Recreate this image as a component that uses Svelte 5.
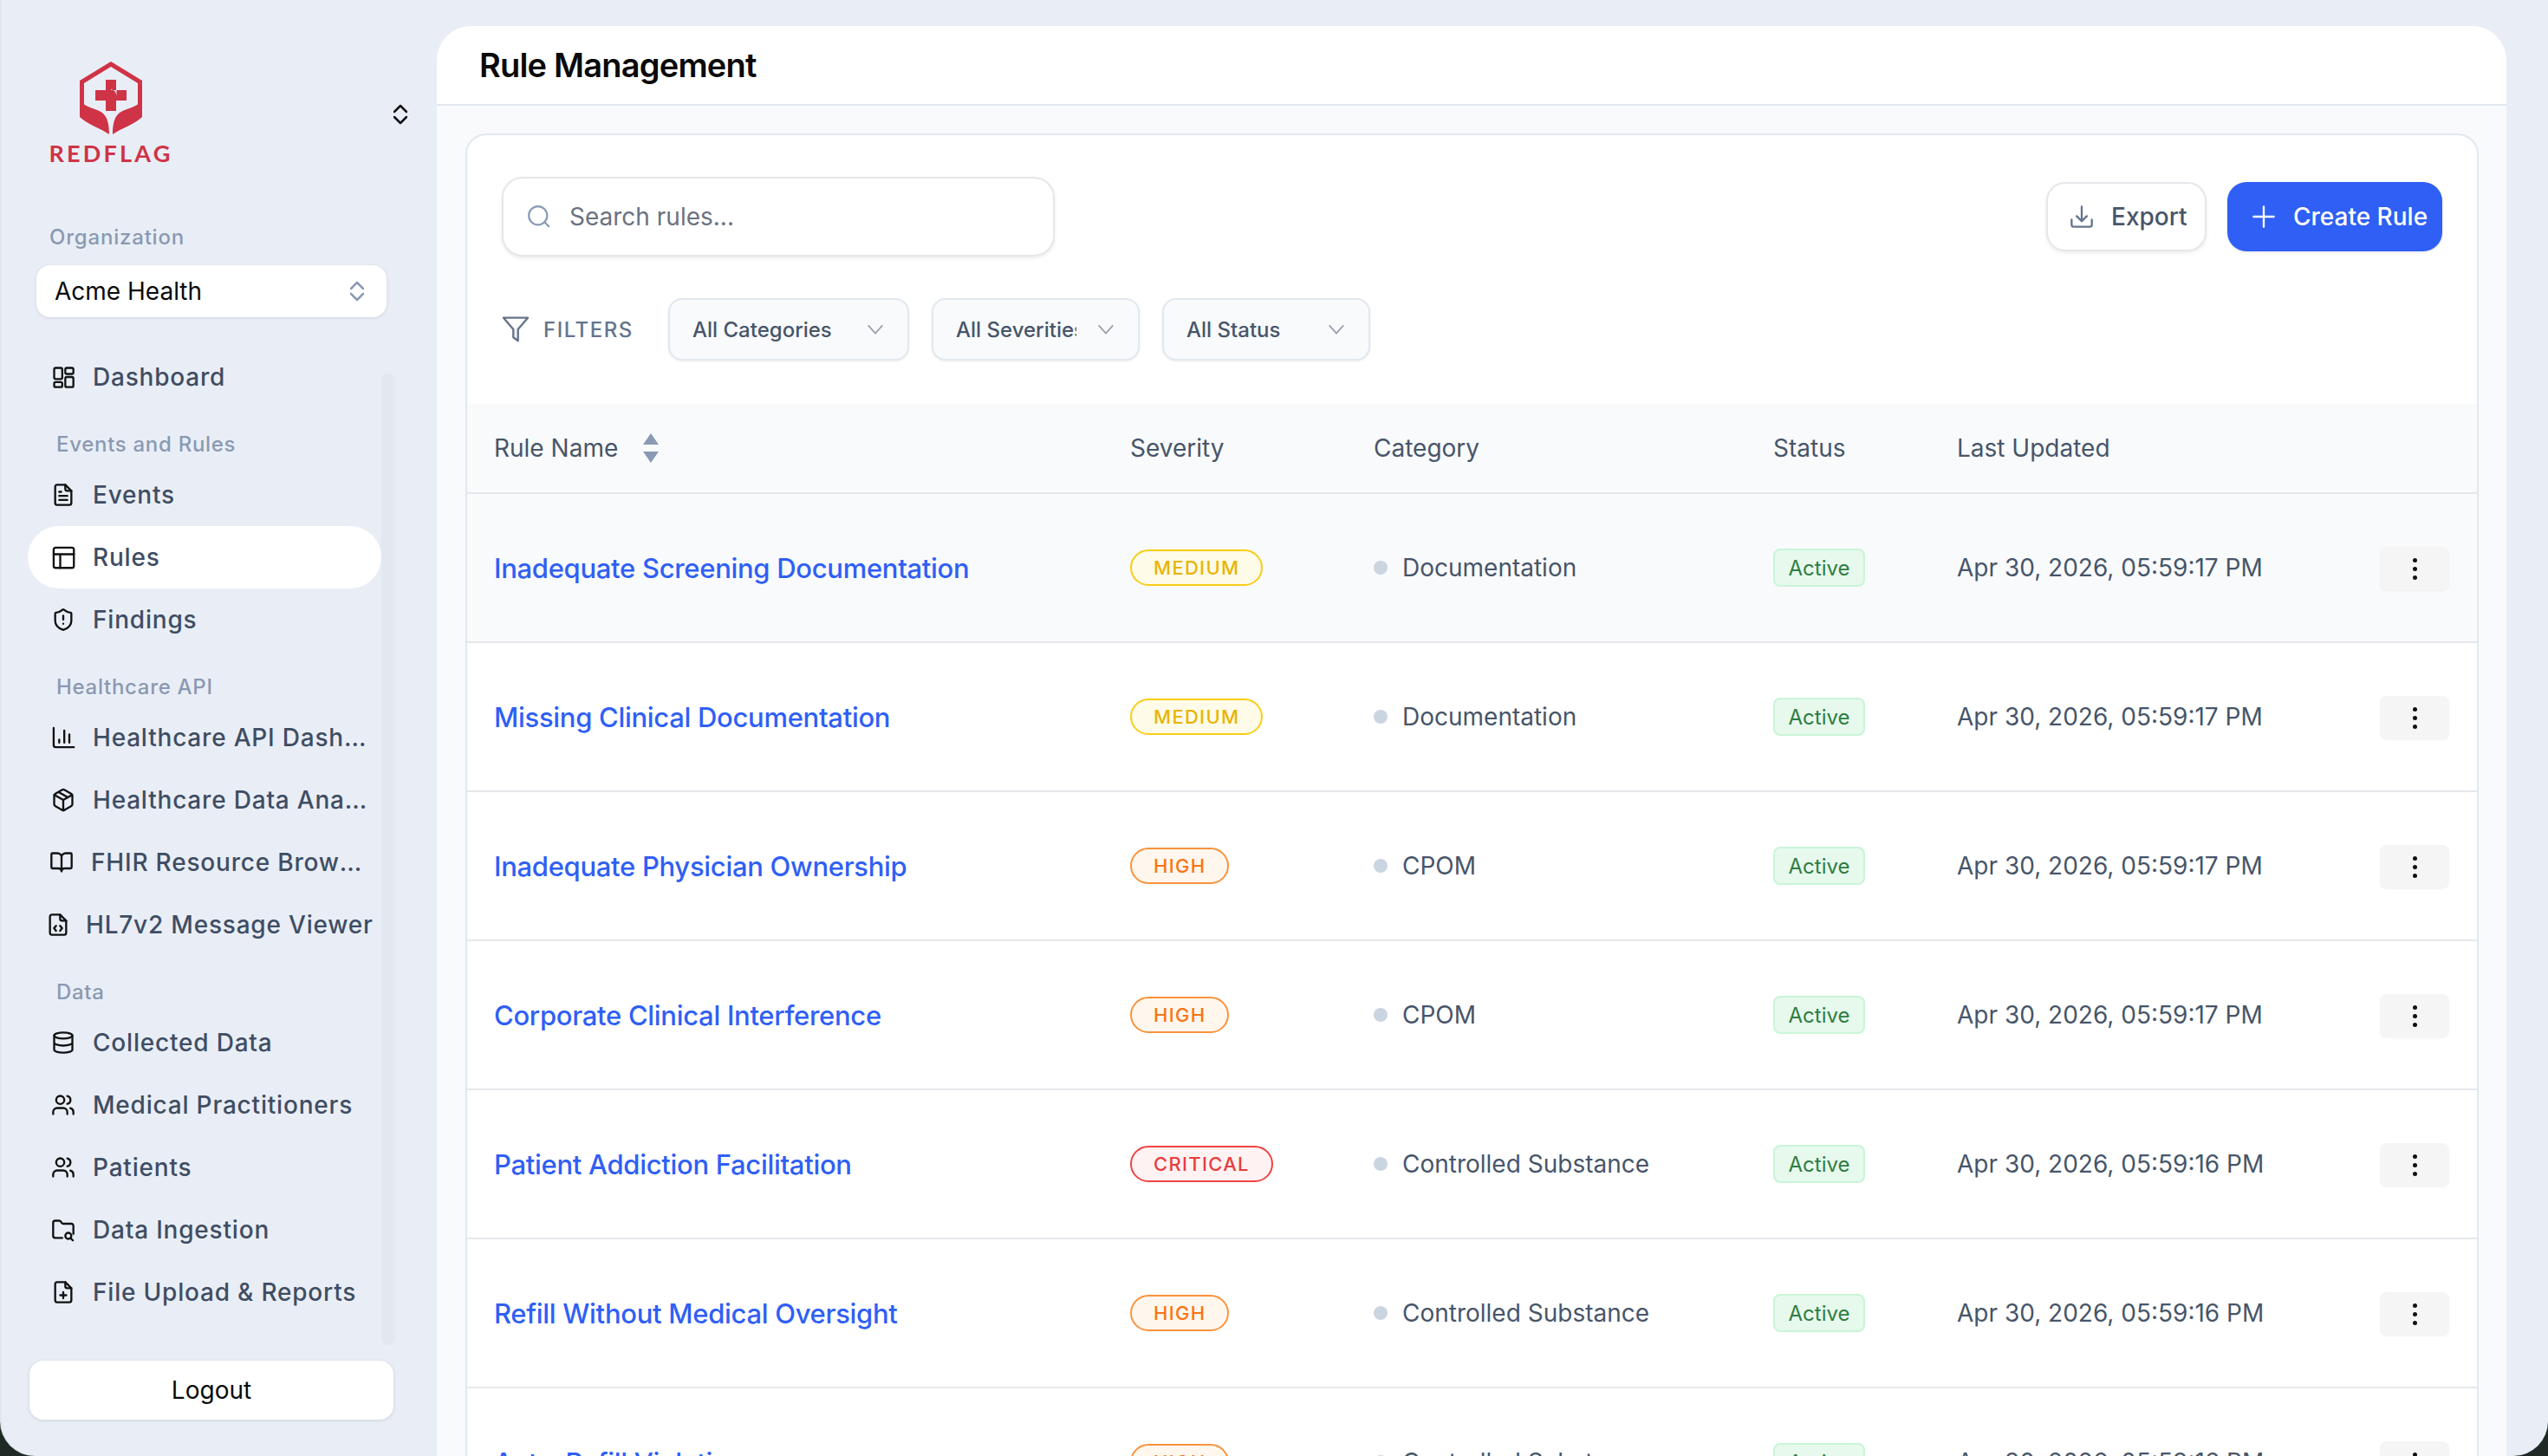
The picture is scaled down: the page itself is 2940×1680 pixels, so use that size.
<script>
  const nav = [
    { label: "Dashboard", icon: "dash" },
    { section: "Events and Rules" },
    { label: "Events", icon: "doc" },
    { label: "Rules", icon: "layout", active: true },
    { label: "Findings", icon: "shield" },
    { section: "Healthcare API" },
    { label: "Healthcare API Dashboard", icon: "chart" },
    { label: "Healthcare Data Analytics", icon: "box" },
    { label: "FHIR Resource Browser", icon: "book", shift: 1 },
    { label: "HL7v2 Message Viewer", icon: "code", shift: 2 },
    { section: "Data" },
    { label: "Collected Data", icon: "db" },
    { label: "Medical Practitioners", icon: "users" },
    { label: "Patients", icon: "users" },
    { label: "Data Ingestion", icon: "folder" },
    { label: "File Upload & Reports", icon: "fileplus" }
  ];

  const rules = [
    { name: "Inadequate Screening Documentation", severity: "MEDIUM", category: "Documentation", updated: "Apr 30, 2026, 05:59:17 PM", hover: true },
    { name: "Missing Clinical Documentation", severity: "MEDIUM", category: "Documentation", updated: "Apr 30, 2026, 05:59:17 PM" },
    { name: "Inadequate Physician Ownership", severity: "HIGH", category: "CPOM", updated: "Apr 30, 2026, 05:59:17 PM" },
    { name: "Corporate Clinical Interference", severity: "HIGH", category: "CPOM", updated: "Apr 30, 2026, 05:59:17 PM" },
    { name: "Patient Addiction Facilitation", severity: "CRITICAL", category: "Controlled Substance", updated: "Apr 30, 2026, 05:59:16 PM" },
    { name: "Refill Without Medical Oversight", severity: "HIGH", category: "Controlled Substance", updated: "Apr 30, 2026, 05:59:16 PM" },
    { name: "Auto-Refill Violations", severity: "HIGH", category: "Controlled Substance", updated: "Apr 30, 2026, 05:59:16 PM" }
  ];
</script>

<div class="shell">
  <aside class="sidebar">
    <div class="brand">
      <div class="logo">
        <svg class="mark" viewBox="0 0 72 84">
          <path fill="#cf3346" d="M36 0 72 22V47L67 52V25L36 6 5 25V52L0 47V22Z" />
          <path fill="#cf3346" d="M30 21H42V33H54V45H42V57H30V45H18V33H30Z" />
          <path fill="#e9eef5" d="M36 32c4 1 6 3 6.500 8V33H36Z" />
          <path fill="#cf3346" d="M0 44c3 6 12 9 20 12 8 3 14 8 14 28C24 77 8 72 0 64ZM72 44c-3 6-12 9-20 12-8 3-14 8-14 28 10-7 26-12 34-20Z" />
        </svg>
        <span class="wordmark">REDFLAG</span>
      </div>
      <svg class="updown black" viewBox="0 0 16 24"><path d="M1 9 8 2l7 7M1 15l7 7 7-7" /></svg>
    </div>

    <div class="org-label">Organization</div>
    <div class="org-select">
      <span>Acme Health</span>
      <svg class="updown" viewBox="0 0 16 24"><path d="M1 9 8 2l7 7M1 15l7 7 7-7" /></svg>
    </div>

    <div class="nav-wrap">
      <div class="track"></div>
      <nav>
        {#each nav as item}
          {#if item.section}
            <div class="section">{item.section}</div>
          {:else}
            <div class="nav-item" class:active={item.active} class:shift1={item.shift === 1} class:shift2={item.shift === 2}>
              <svg class="nav-icon" viewBox="0 0 24 24">
                {#if item.icon === "dash"}
                  <rect x="3" y="3" width="8" height="11" rx="1.500" /><rect x="14" y="3" width="8" height="6" rx="1.500" /><rect x="3" y="17" width="8" height="5" rx="1.500" /><rect x="14" y="12" width="8" height="10" rx="1.500" />
                {:else if item.icon === "doc"}
                  <path d="M14 2H6a2 2 0 0 0-2 2v16a2 2 0 0 0 2 2h12a2 2 0 0 0 2-2V8Z" /><path d="M14 2v4a2 2 0 0 0 2 2h4M8 9h2M8 13h8M8 17h8" />
                {:else if item.icon === "layout"}
                  <rect x="2.500" y="2.500" width="20" height="20" rx="2" /><path d="M2.500 9h20M9 9v13.500" />
                {:else if item.icon === "shield"}
                  <path d="M20 13c0 5-3.500 7.500-7.700 9a1 1 0 0 1-.7 0C7.500 20.500 4 18 4 13V6a1 1 0 0 1 1-1c2 0 4.500-1.200 6.200-2.700a1.200 1.200 0 0 1 1.600 0C14.500 3.800 17 5 19 5a1 1 0 0 1 1 1Z" /><path d="M12 8v4M12 16h.01" />
                {:else if item.icon === "chart"}
                  <path d="M2.500 2.500v17a2 2 0 0 0 2 2h18M8 17v-3M13 17V5M18 17V9" />
                {:else if item.icon === "box"}
                  <path d="M11 22a2 2 0 0 0 2 0l7-4a2 2 0 0 0 1-1.700V7.700a2 2 0 0 0-1-1.700l-7-4a2 2 0 0 0-2 0L4 6a2 2 0 0 0-1 1.700v8.600A2 2 0 0 0 4 18Z" /><path d="M12 22V12M3.300 7 12 12l8.700-5M7.500 4.300l9 5.200" />
                {:else if item.icon === "book"}
                  <path d="M12 7v14M3 18a1 1 0 0 1-1-1V4a1 1 0 0 1 1-1h5a4 4 0 0 1 4 4 4 4 0 0 1 4-4h5a1 1 0 0 1 1 1v13a1 1 0 0 1-1 1h-6a3 3 0 0 0-3 3 3 3 0 0 0-3-3Z" />
                {:else if item.icon === "code"}
                  <path d="M14 2H6a2 2 0 0 0-2 2v16a2 2 0 0 0 2 2h12a2 2 0 0 0 2-2V8Z" /><path d="M14 2v4a2 2 0 0 0 2 2h4M10 13l-2 2.500 2 2.500M14 13l2 2.500-2 2.500" />
                {:else if item.icon === "db"}
                  <ellipse cx="12" cy="5" rx="9" ry="3" /><path d="M3 5v14a9 3 0 0 0 18 0V5M3 12a9 3 0 0 0 18 0" />
                {:else if item.icon === "users"}
                  <path d="M16 21v-2a4 4 0 0 0-4-4H6a4 4 0 0 0-4 4v2" /><circle cx="9" cy="7" r="4" /><path d="M22 21v-2a4 4 0 0 0-3-3.900M16 3.100a4 4 0 0 1 0 7.800" />
                {:else if item.icon === "folder"}
                  <path d="M11 20H4a2 2 0 0 1-2-2V5a2 2 0 0 1 2-2h3.900a2 2 0 0 1 1.700.9l.8 1.200a2 2 0 0 0 1.700.9H20a2 2 0 0 1 2 2v8" /><circle cx="17" cy="18" r="3" /><path d="m21.500 22.500-2.300-2.300" />
                {:else if item.icon === "fileplus"}
                  <path d="M14 2H6a2 2 0 0 0-2 2v16a2 2 0 0 0 2 2h12a2 2 0 0 0 2-2V8Z" /><path d="M14 2v4a2 2 0 0 0 2 2h4M9 15h6M12 12v6" />
                {/if}
              </svg>
              <span class="nav-text">{item.label}</span>
            </div>
          {/if}
        {/each}
      </nav>
    </div>

    <button class="logout">Logout</button>
  </aside>

  <main class="panel">
    <header class="top">
      <h1>Rule Management</h1>
    </header>
    <div class="content">
      <section class="card">
        <div class="toolbar">
          <div class="search">
            <svg class="search-icon" viewBox="0 0 24 24"><circle cx="11" cy="11" r="8.500" /><path d="m21 21-4-4" /></svg>
            <span>Search rules...</span>
          </div>
          <div class="actions">
            <button class="btn export">
              <svg viewBox="0 0 24 24"><path d="M2 15v5a2 2 0 0 0 2 2h16a2 2 0 0 0 2-2v-5M12 2v14M7 11.500l5 5 5-5" /></svg>
              Export
            </button>
            <button class="btn create">
              <svg viewBox="0 0 24 24"><path d="M12 2v20M2 12h20" /></svg>
              Create Rule
            </button>
          </div>
        </div>

        <div class="filters">
          <div class="filter-label">
            <svg viewBox="0 0 24 24"><path d="M1.500 2h21l-8.500 10v10l-4-3v-7Z" /></svg>
            FILTERS
          </div>
          <div class="select s1"><span>All Categories</span><svg viewBox="0 0 24 24"><path d="m3 7 9 10 9-10" /></svg></div>
          <div class="select s2"><span>All Severities</span><svg viewBox="0 0 24 24"><path d="m3 7 9 10 9-10" /></svg></div>
          <div class="select s3"><span>All Status</span><svg viewBox="0 0 24 24"><path d="m3 7 9 10 9-10" /></svg></div>
        </div>

        <div class="row head">
          <div class="c-name">
            Rule Name
            <svg class="sort" viewBox="0 0 20 34"><path d="M10 0l9 13H1ZM10 34 1 21h18Z" /></svg>
          </div>
          <div class="c-sev">Severity</div>
          <div class="c-cat">Category</div>
          <div class="c-status">Status</div>
          <div class="c-date">Last Updated</div>
        </div>

        {#each rules as rule}
          <div class="row" class:hover={rule.hover}>
            <div class="c-name"><span class="link">{rule.name}</span></div>
            <div class="c-sev"><span class="badge {rule.severity.toLowerCase()}">{rule.severity}</span></div>
            <div class="c-cat"><i class="dot"></i>{rule.category}</div>
            <div class="c-status"><span class="active-pill">Active</span></div>
            <div class="c-date">{rule.updated}</div>
            <button class="more"><i></i><i></i><i></i></button>
          </div>
        {/each}
      </section>
    </div>
  </main>
</div>

<style>
  :global(body) {
    margin: 0;
    background: #1f2a26;
  }

  .shell {
    display: flex;
    width: 2940px;
    height: 1680px;
    overflow: hidden;
    box-sizing: border-box;
    padding-right: 16px;
    background: #e9eef6;
    border-radius: 0 0 40px 40px;
    border-left: 2px solid #e3e6ea;
    font-family: Inter, "Liberation Sans", sans-serif;
  }

  /* sidebar */
  .sidebar {
    width: 502px;
    flex: none;
    display: flex;
    flex-direction: column;
  }

  .brand {
    height: 234px;
    display: flex;
    padding: 71px 34px 0 54px;
    box-sizing: border-box;
    justify-content: space-between;
    align-items: flex-start;
  }

  .logo {
    width: 144px;
    display: flex;
    flex-direction: column;
    align-items: center;
  }

  .mark {
    width: 72px;
    height: 84px;
    display: block;
  }

  .wordmark {
    margin-top: 7px;
    font-family: Lato, sans-serif;
    font-size: 27px;
    line-height: 30px;
    font-weight: 700;
    letter-spacing: 3.200px;
    color: #cf3346;
    white-space: nowrap;
  }

  .updown {
    width: 16px;
    height: 24px;
    fill: none;
    stroke: #8b9ab5;
    stroke-width: 2.500;
    stroke-linecap: round;
    stroke-linejoin: round;
  }

  .updown.black {
    stroke: #111;
    margin-top: 49px;
  }

  .org-label {
    padding-left: 55px;
    margin-top: 25px;
    font-size: 24px;
    line-height: 30px;
    font-weight: 500;
    letter-spacing: 0.800px;
    color: #8a99b3;
  }

  .org-select {
    margin: 17px 0 0 40px;
    width: 404px;
    height: 60px;
    box-sizing: border-box;
    padding: 0 26px 0 21px;
    display: flex;
    align-items: center;
    justify-content: space-between;
    background: #fff;
    border-radius: 16px;
    box-shadow: 0 1px 4px rgba(0, 0, 0, 0.1);
    font-size: 28px;
    color: #0a0a0a;
  }

  .nav-wrap {
    position: relative;
    flex: 1;
    min-height: 0;
    margin-top: 33px;
  }

  .track {
    position: absolute;
    left: 438px;
    top: 32px;
    width: 16px;
    height: 1121px;
    border-radius: 8px;
    background: #e2e8f0;
  }

  nav {
    padding-left: 30px;
    width: 408px;
  }

  .section {
    height: 64px;
    padding: 24px 0 0 33px;
    box-sizing: border-box;
    font-size: 24px;
    line-height: 36px;
    font-weight: 500;
    letter-spacing: 0.700px;
    color: #8a99b3;
  }

  .nav-item {
    height: 72px;
    display: flex;
    align-items: center;
    padding-left: 27px;
    padding-right: 14px;
    gap: 20px;
    border-radius: 36px;
    font-size: 28px;
    font-weight: 500;
    letter-spacing: 0.800px;
    color: #3f4d63;
  }

  .nav-item.active {
    background: #fff;
  }

  .nav-item.shift1 {
    padding-left: 25px;
  }

  .nav-item.shift2 {
    padding-left: 21px;
    padding-right: 2px;
    gap: 18px;
  }

  .nav-icon {
    width: 28px;
    height: 28px;
    flex: none;
    fill: none;
    stroke: #111;
    stroke-width: 2;
    stroke-linecap: round;
    stroke-linejoin: round;
  }

  .nav-text {
    min-width: 0;
    overflow: hidden;
    white-space: nowrap;
    text-overflow: ellipsis;
  }

  .logout {
    margin: 0 0 42px 32px;
    width: 420px;
    height: 68px;
    flex: none;
    border: none;
    background: #fff;
    border-radius: 16px;
    box-shadow: 0 1px 4px rgba(0, 0, 0, 0.12);
    font-family: inherit;
    font-size: 28px;
    color: #0a0a0a;
  }

  /* main panel */
  .panel {
    width: 2388px;
    flex: none;
    margin-top: 30px;
    background: #f8fafc;
    border-radius: 40px 40px 0 0;
    overflow: hidden;
  }

  .top {
    height: 92px;
    box-sizing: border-box;
    background: #fff;
    border-bottom: 2px solid #e2e8f0;
    padding-left: 49px;
    display: flex;
    align-items: center;
  }

  h1 {
    margin: 0;
    font-size: 38px;
    font-weight: 600;
    letter-spacing: -0.800px;
    color: #0a0a0a;
  }

  .content {
    padding: 32px 32px 0 33px;
  }

  .card {
    background: #fff;
    border: 2px solid #e2e8f0;
    border-bottom: none;
    border-radius: 24px 24px 0 0;
  }

  .toolbar {
    display: flex;
    justify-content: space-between;
    align-items: center;
    padding: 48px 40px 0 40px;
  }

  .search {
    width: 638px;
    height: 92px;
    box-sizing: border-box;
    display: flex;
    align-items: center;
    gap: 20px;
    padding-left: 26px;
    background: #fff;
    border: 2px solid #e5e7eb;
    border-radius: 24px;
    box-shadow: 0 2px 4px rgba(0, 0, 0, 0.08);
    font-size: 28px;
    color: #6b7280;
  }

  .search-icon {
    width: 30px;
    height: 30px;
    fill: none;
    stroke: #8a9bb5;
    stroke-width: 1.800;
    stroke-linecap: round;
  }

  .actions {
    display: flex;
    gap: 24px;
  }

  .btn {
    height: 80px;
    display: flex;
    align-items: center;
    gap: 20px;
    box-sizing: border-box;
    border-radius: 22px;
    font-family: inherit;
    font-size: 28px;
    font-weight: 500;
  }

  .btn svg {
    width: 28px;
    height: 28px;
    fill: none;
    stroke-width: 2;
    stroke-linecap: round;
    stroke-linejoin: round;
  }

  .export {
    width: 185px;
    padding: 0 0 0 25px;
    background: #fff;
    border: 2px solid #e5e7eb;
    box-shadow: 0 2px 4px rgba(0, 0, 0, 0.08);
    color: #475569;
  }

  .export svg {
    stroke: #64748b;
  }

  .create {
    width: 248px;
    padding: 0 0 0 28px;
    background: #2f5ff5;
    border: none;
    box-shadow: 0 1px 3px rgba(0, 0, 0, 0.12);
    color: #fff;
  }

  .create svg {
    stroke: #fff;
  }

  .filters {
    display: flex;
    align-items: center;
    margin-top: 48px;
    padding-left: 40px;
    gap: 26px;
  }

  .filter-label {
    width: 166px;
    display: flex;
    align-items: center;
    gap: 16px;
    font-size: 24px;
    font-weight: 500;
    letter-spacing: 1.500px;
    color: #64748b;
  }

  .filter-label svg {
    width: 32px;
    height: 32px;
    fill: none;
    stroke: #64748b;
    stroke-width: 1.800;
    stroke-linejoin: round;
  }

  .select {
    height: 72px;
    box-sizing: border-box;
    display: flex;
    align-items: center;
    justify-content: space-between;
    padding: 0 26px;
    background: #f8fafc;
    border: 2px solid #e2e8f0;
    border-radius: 16px;
    box-shadow: 0 1px 3px rgba(0, 0, 0, 0.08);
    font-size: 24px;
    font-weight: 500;
    color: #475569;
  }

  .select span {
    overflow: hidden;
    white-space: nowrap;
  }

  .select svg {
    width: 22px;
    height: 22px;
    flex: none;
    margin-left: 16px;
    fill: none;
    stroke: #9ca3af;
    stroke-width: 2;
  }

  .s1 {
    width: 278px;
  }

  .s2 {
    width: 240px;
    margin-left: 0;
  }

  .s3 {
    width: 240px;
  }

  .s2 span {
    width: 139px;
  }

  /* table */
  .row {
    position: relative;
    display: flex;
    align-items: center;
    height: 172px;
    box-sizing: border-box;
    border-bottom: 2px solid #e5e7eb;
    padding-left: 31px;
    font-size: 28px;
    color: #475569;
  }

  .row.hover {
    background: #f9fafc;
  }

  .row.head {
    height: 104px;
    margin-top: 50px;
    background: #f8fafc;
  }

  .c-name {
    width: 734px;
    display: flex;
    align-items: center;
    gap: 28px;
  }

  .c-sev {
    width: 281px;
    display: flex;
  }

  .c-cat {
    width: 461px;
    display: flex;
    align-items: center;
  }

  .c-status {
    width: 212px;
    display: flex;
  }

  .sort {
    width: 20px;
    height: 34px;
    fill: #8a9ab3;
  }

  .link {
    font-size: 31px;
    font-weight: 500;
    color: #2f5ff5;
    letter-spacing: -0.300px;
  }

  .badge {
    height: 42px;
    box-sizing: border-box;
    display: inline-flex;
    align-items: center;
    padding: 0 25px;
    border: 2px solid;
    border-radius: 21px;
    font-size: 22px;
    font-weight: 500;
    letter-spacing: 1.300px;
  }

  .medium {
    background: #fefce8;
    border-color: #facc15;
    color: #eab308;
  }

  .high {
    background: #fff7ed;
    border-color: #fb923c;
    color: #f97316;
  }

  .critical {
    background: #fef2f2;
    border-color: #ef4444;
    color: #e53e3e;
  }

  .dot {
    width: 16px;
    height: 16px;
    margin-right: 17px;
    border-radius: 50%;
    background: #cbd5e1;
  }

  .active-pill {
    height: 44px;
    width: 106px;
    box-sizing: border-box;
    display: flex;
    align-items: center;
    justify-content: center;
    background: #e6f9ec;
    border: 2px solid #c9f5d7;
    border-radius: 8px;
    font-size: 24px;
    color: #2f7d43;
  }

  .more {
    position: absolute;
    left: 2207px;
    top: 61px;
    width: 80px;
    height: 50px;
    border: none;
    border-radius: 8px;
    padding: 0;
    background: #f5f5f5;
    box-shadow: 0 1px 2px rgba(0, 0, 0, 0.05);
    display: flex;
    flex-direction: column;
    align-items: center;
    justify-content: center;
    gap: 5px;
  }

  .more i {
    width: 5px;
    height: 5px;
    border-radius: 50%;
    background: #111;
  }
</style>
